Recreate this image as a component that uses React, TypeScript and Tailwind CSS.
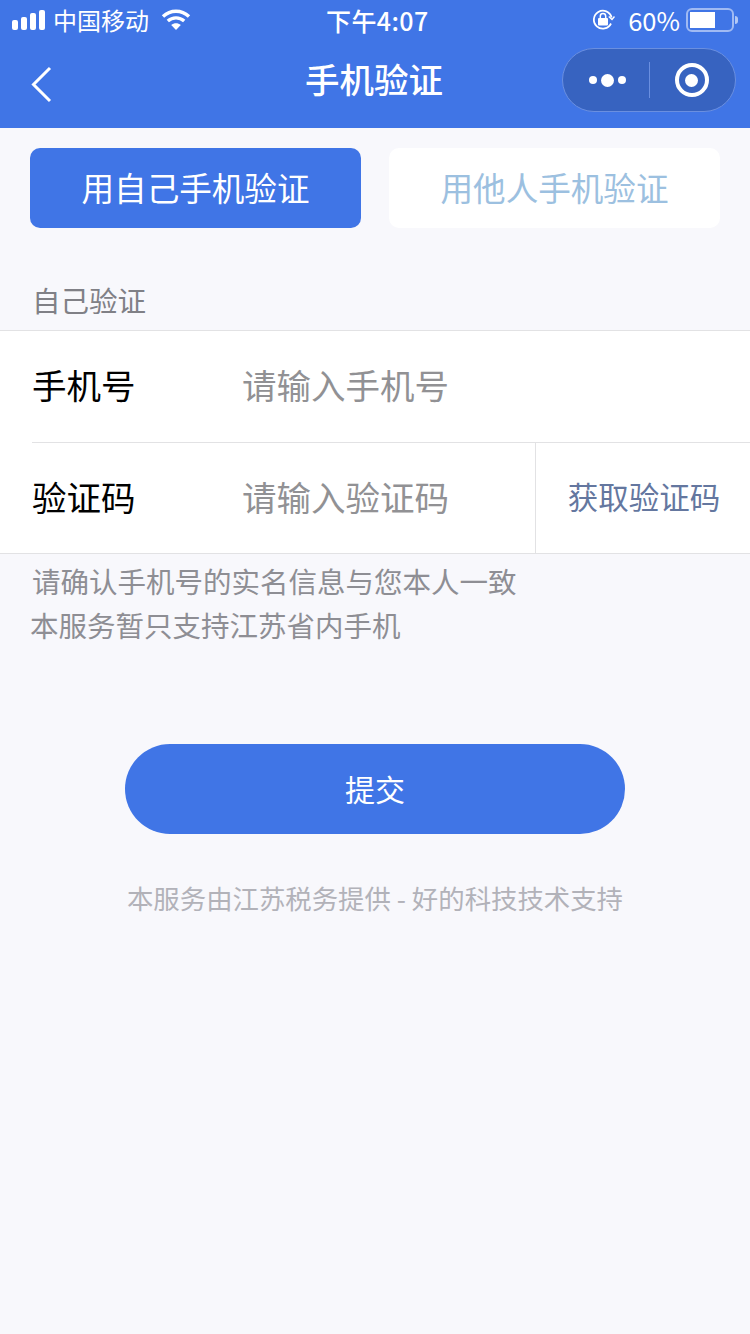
import React from 'react';

const font = { fontFamily: '"Noto Sans CJK SC", "Noto Sans", sans-serif' };

const StatusBar = () => (
    <div className="flex items-center h-10 relative text-white">
        <div className="flex items-end gap-[3px] ml-3 h-5">
            <span className="w-[6px] h-[10px] bg-white rounded-[2px]" />
            <span className="w-[6px] h-[13px] bg-white rounded-[2px]" />
            <span className="w-[6px] h-[17px] bg-white rounded-[2px]" />
            <span className="w-[6px] h-5 bg-white rounded-[2px]" />
        </div>
        <span className="ml-[8px] text-[24px] leading-none">中国移动</span>
        <svg width="30" height="24" viewBox="0 0 30 24" className="ml-[12px]" fill="none" stroke="white" strokeWidth="3.4">
            <path d="M2 8.5C9.5 1.5 20.5 1.5 28 8.5" />
            <path d="M6.8 13C11.5 8.8 18.5 8.8 23.2 13" />
            <path d="M15 22L10.2 17C13 14.6 17 14.6 19.8 17Z" fill="white" stroke="none" />
        </svg>
        <span className="absolute left-[326px] top-[2px] text-[25px] leading-9 font-medium tracking-[0.4px]">下午4:07</span>
        <div className="ml-auto flex items-center mr-[12px]">
            <svg width="24" height="24" viewBox="0 0 24 24" fill="none" stroke="white" strokeWidth="1.8">
                <path d="M20 15.5A9 9 0 1 1 20.6 9.5" />
                <path d="M17.8 8.5L21 11.5L23.5 8.5" strokeWidth="1.4" />
                <rect x="7" y="10" width="10" height="7.5" rx="1" fill="white" stroke="none" />
                <path d="M9.3 10V8.2a2.7 2.7 0 0 1 5.4 0V10" strokeWidth="1.5" />
            </svg>
            <span className="ml-[13px] text-[25.5px] leading-none">60%</span>
            <div className="ml-[6px] w-12 h-6 border-2 border-white/50 rounded-[6px] p-[2px]">
                <div className="w-[25px] h-full bg-white" />
            </div>
            <span className="ml-[1px] w-[3px] h-2 bg-white/60 rounded-r-sm" />
        </div>
    </div>
);

const NavBar = () => (
    <div className="relative flex items-center justify-center h-[88px] pb-[12px] pr-[2px]">
        <svg width="24" height="38" viewBox="0 0 24 38" className="absolute left-[30px] top-[26px]" fill="none" stroke="white" strokeWidth="3">
            <path d="M20 2L3.5 18.5L20 35" />
        </svg>
        <span className="text-white text-[34.5px] leading-none font-medium">手机验证</span>
        <div className="absolute left-[562px] top-[8px] w-[174px] h-[64px] rounded-full bg-[#3763c0] border border-[#6a8fe0] flex items-center">
            <div className="w-[86px] pl-[2px] flex items-center justify-center gap-1">
                <span className="w-2 h-2 rounded-full bg-white" />
                <span className="w-[13px] h-[13px] rounded-full bg-white" />
                <span className="w-2 h-2 rounded-full bg-white" />
            </div>
            <span className="w-px h-9 bg-[#6a8fe0]" />
            <div className="flex-1 flex items-center justify-center pr-[2px]">
                <span className="w-[34px] h-[34px] rounded-full border-[4px] border-white flex items-center justify-center">
                    <span className="w-[13px] h-[13px] rounded-full bg-white" />
                </span>
            </div>
        </div>
    </div>
);

const App: React.FC = () => {
    return (
        <div className="w-[750px] h-[1334px] bg-[#f8f8fc] overflow-hidden" style={font}>
            <div className="bg-[#4075e6]">
                <StatusBar />
                <NavBar />
            </div>

            <div className="flex justify-between px-[30px] pt-5">
                <button type="button" className="w-[331px] h-20 pb-[2px] rounded-[10px] bg-[#4075e6] text-white text-[32.6px]">用自己手机验证</button>
                <button type="button" className="w-[331px] h-20 pb-[2px] rounded-[10px] bg-white text-[#9cc0e0] text-[32.6px]">用他人手机验证</button>
            </div>

            <div className="pl-[32px] pt-[52px] pb-[10px] text-[28.5px] leading-[40px] text-[#808086]">自己验证</div>

            <div className="bg-white border-y border-[#e2e2e4]">
                <div className="flex items-center h-[112px] pb-[3px] ml-[32px] border-b border-[#e2e2e4]">
                    <span className="w-[210px] text-[34.5px] text-black">手机号</span>
                    <span className="text-[34.5px] text-[#919194]">请输入手机号</span>
                </div>
                <div className="flex items-center h-[110px] pl-[32px]">
                    <span className="w-[210px] pb-[3px] text-[34.5px] text-black">验证码</span>
                    <span className="pb-[3px] text-[34.5px] text-[#919194]">请输入验证码</span>
                    <div className="ml-auto w-[215px] h-full pb-[3px] pl-[2px] border-l border-[#e2e2e4] flex items-center justify-center">
                        <span className="text-[30.5px] text-[#64779f]">获取验证码</span>
                    </div>
                </div>
            </div>

            <div className="pt-[4px] pb-[1px] text-[28.5px] leading-[44px] text-[#8e8e94]">
                <p className="pl-[32px] pt-[1px]">请确认手机号的实名信息与您本人一致</p>
                <p className="pl-[30px]">本服务暂只支持江苏省内手机</p>
            </div>

            <div className="flex justify-center mt-[96px]">
                <button type="button" className="w-[500px] h-[90px] pb-[2px] rounded-full bg-[#4075e6] text-white text-[30px]">提交</button>
            </div>

            <div className="text-center mt-[44px] text-[26.4px] leading-10 text-[#b2b2b9]">本服务由江苏税务提供 - 好的科技技术支持</div>
        </div>
    );
};

export default App;
